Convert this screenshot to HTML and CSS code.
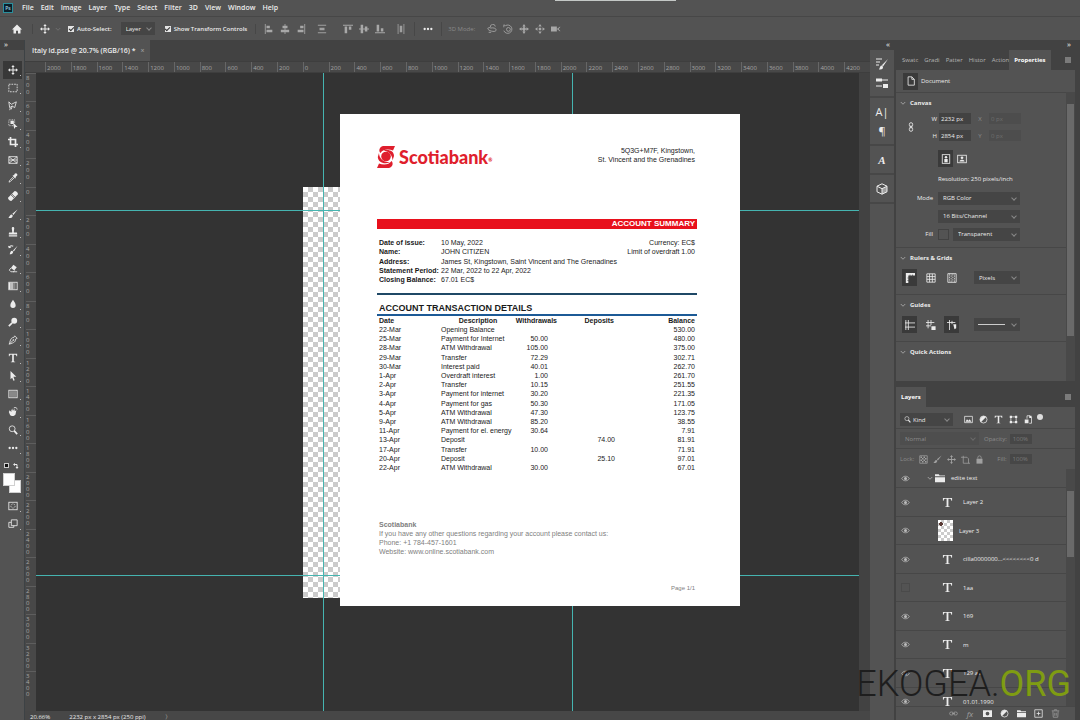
FILE: index.html
```html
<!DOCTYPE html>
<html lang="en">
<head>
  <meta charset="UTF-8" />
  <meta name="viewport" content="width=device-width, initial-scale=1" />
  <title>Italy id.psd @ 20.7%</title>
  <link rel="stylesheet" href="styles.css">
</head>
<body>

  <!-- Icon sprite -->
  <svg class="sprite" aria-hidden="true">
    <symbol id="move" viewBox="0 0 12 12"><path d="M6 0l2 2.5H6.6v2.9h2.9V4L12 6 9.500 8V6.600H6.600v2.900H8L6 12 4 9.500h1.400V6.600H2.500V8L0 6l2.500-2v1.400h2.900V2.500H4z"/></symbol>
    <symbol id="marquee" viewBox="0 0 12 12"><rect class="ln" x="1" y="1.500" width="10" height="9" stroke-dasharray="2 1.200"/></symbol>
    <symbol id="lasso" viewBox="0 0 12 12"><path class="ln" d="M1 1l3 3 6-3-2 7-3-2-3 2zM3 8l-1 3M5 6l-1 4"/></symbol>
    <symbol id="quick" viewBox="0 0 12 12"><rect class="ln" x="1" y="1" width="7" height="7" stroke-dasharray="1 1"/><path d="M3 2h4v4H3zM6 4.500l5.500 5-2.500.2L7.500 12z"/></symbol>
    <symbol id="crop" viewBox="0 0 12 12"><path class="ln bold" d="M3 0v9h9M0 3h9v9"/></symbol>
    <symbol id="frame" viewBox="0 0 12 12"><path class="ln" d="M1 2h10v8H1zM1 2l10 8M11 2L1 10M1 6h10"/></symbol>
    <symbol id="dropper" viewBox="0 0 12 12"><path d="M8 1c2-2 4 1 3 2L9 5l.5.8-.8.7-3.200-3.200.8-.8.8.5z"/><path class="ln" d="M6.500 4.500L2 9l-.8 2L3 10l4.800-4.500"/></symbol>
    <symbol id="heal" viewBox="0 0 12 12"><path d="M0 8l8-8c2 0 4 2 4 4l-8 8c-2 0-4-2-4-4z"/><path class="cut" d="M3.500 4.500l4 4M4.500 3.500l4 4"/></symbol>
    <symbol id="brush" viewBox="0 0 12 12"><path d="M11.500.5L5.200 5.800l1.300 1.500zM4.500 6.500c-2 0-2 2-4 4 2.500.8 5 .2 5.200-2.700z"/></symbol>
    <symbol id="stamp" viewBox="0 0 12 12"><path d="M4.500 1.500c0-2 3-2 3 0L7 5v1.500h3c1 0 1 .5 1 2.500H1c0-2 0-2.500 1-2.500h3V5zM1 10h10v1.500H1z"/></symbol>
    <symbol id="history" viewBox="0 0 12 12"><path d="M11.500 1L6 6.500l1 1.200zM5 7c-2 0-2 1.500-3 4 2.500 0 4-.5 4.200-3zM0 1l1 3 3-1-1.400-.8A3 3 0 0 1 6 2l.5-1A4 4 0 0 0 1.500 1.500z"/></symbol>
    <symbol id="eraser" viewBox="0 0 12 12"><path d="M6.500 2l4 3-3 4-4-3z"/><path class="ln" d="M3.500 6L1.500 8.500l2 2H7l1-1.500M6 10.500h5"/></symbol>
    <symbol id="gradient" viewBox="0 0 12 12"><rect class="ln" x="1" y="1.500" width="10" height="9"/><path d="M1 2h2v8H1z"/><path opacity=".7" d="M3 2h3v8H3z"/><path opacity=".35" d="M6 2h3v8H6z"/></symbol>
    <symbol id="blur" viewBox="0 0 12 12"><path d="M6 1c1 2 3.200 4 3.200 6.500a3.200 3.200 0 0 1-6.400 0C2.800 5 5 3 6 1z"/></symbol>
    <symbol id="dodge" viewBox="0 0 12 12"><circle cx="7.500" cy="4.500" r="3.500"/><path class="ln bold" d="M5 7l-4 4"/></symbol>
    <symbol id="pen" viewBox="0 0 12 12"><path class="ln" d="M8 1l3 3-2 1c0 3-1 4-7.500 6C3 5 4 3 7 3zM1.500 11L6 6.500"/><circle cx="6.500" cy="6" r="1"/></symbol>
    <symbol id="type" viewBox="0 0 12 12"><path d="M1 1h10v3h-.8C10 2.500 9.500 2 8 2h-1v7.500c0 .7.500.9 1.600 1v.5H3.400v-.5c1.100-.1 1.600-.3 1.600-1V2H4C2.500 2 2 2.500 1.800 4H1z"/></symbol>
    <symbol id="arrow" viewBox="0 0 12 12"><path d="M3 0l7 7H6.500L8 11l-1.500.6L5 8l-2 2z"/></symbol>
    <symbol id="rect" viewBox="0 0 12 12"><rect class="ln" x="1" y="1.500" width="10" height="9"/><path opacity=".35" d="M2 2.500h8v7H2z"/></symbol>
    <symbol id="hand" viewBox="0 0 12 12"><path d="M2 4l2 2V2.500l1 2L6 1.500l.5 3L8 2v3l2-1-1 5c-.8 2-5 2.500-6.500.5L1 6z"/><path class="ln" d="M7 1c2-1 4 0 4 2"/></symbol>
    <symbol id="search" viewBox="0 0 12 12"><circle class="ln" cx="5" cy="4.500" r="3.500"/><path class="ln bold" d="M7.500 7l3.500 4"/></symbol>
    <symbol id="dots" viewBox="0 0 12 12"><circle cx="2" cy="6" r="1.400"/><circle cx="6" cy="6" r="1.400"/><circle cx="10" cy="6" r="1.400"/></symbol>
    <symbol id="mask" viewBox="0 0 12 12"><rect class="ln" x="1" y="1.500" width="10" height="9"/><circle class="ln" cx="6" cy="6" r="2.500" stroke-dasharray="1 1"/></symbol>
    <symbol id="screens" viewBox="0 0 12 12"><path class="ln" d="M4 1h7v7H4zM4 4H1v6h6V8"/></symbol>
    <symbol id="home" viewBox="0 0 12 12"><path d="M6 .5L0 6.500h1.800V11.500h3V8h2.400v3.500h3V6.500H12z"/></symbol>
    <symbol id="al-left" viewBox="0 0 12 12"><path d="M1 0h1v12H1zM3 2h4v3H3zM3 7h7v3H3z"/></symbol>
    <symbol id="al-mid" viewBox="0 0 12 12"><path d="M5.500 0h1v12h-1zM3 2h6v3H3zM1 7h10v3H1z"/></symbol>
    <symbol id="al-right" viewBox="0 0 12 12"><path d="M10 0h1v12h-1zM5 2h4v3H5zM2 7h7v3H2z"/></symbol>
    <symbol id="al-dist" viewBox="0 0 12 12"><path d="M1 1h10v1H1zM1 10h10v1H1zM3 4.500h6v3H3z"/></symbol>
    <symbol id="al-top" viewBox="0 0 12 12"><path d="M0 1h12v1H0zM2 3h3v8H2zM7 3h3v4H7z"/></symbol>
    <symbol id="al-center" viewBox="0 0 12 12"><path d="M0 5.500h12v1H0zM2 1h3v10H2zM7 3h3v6H7z"/></symbol>
    <symbol id="al-bottom" viewBox="0 0 12 12"><path d="M0 10h12v1H0zM2 1h3v8H2zM7 5h3v4H7z"/></symbol>
    <symbol id="al-spread" viewBox="0 0 12 12"><path d="M2 0h1v12H2zM9 0h1v12H9zM4.500 2h3v8h-3z"/></symbol>
    <symbol id="orbit" viewBox="0 0 12 12"><path class="ln" d="M4 4a3 3 0 0 1 6-1M1 5c-1 3 10 6 10 2 0-2-4-3-7-2M1 5l3-1M5 10H2"/></symbol>
    <symbol id="roll" viewBox="0 0 12 12"><circle class="ln" cx="6.500" cy="6.500" r="2.300"/><path class="ln" d="M1 4V1l2 1a5 5 0 1 1-2 6"/></symbol>
    <symbol id="slide" viewBox="0 0 12 12"><path d="M6 0l2 3H6.700v2.300H9V4l3 2-3 2V6.700H6.700V9H8l-2 3-2-3h1.300V6.700H3V8L0 6l3-2v1.300h2.300V3H4z"/><circle cx="6" cy="6" r="2"/></symbol>
    <symbol id="scale" viewBox="0 0 12 12"><path d="M4.500 4.500h3v3h-3zM6 0l2 3H4zM6 12l2-3H4zM0 6l3-2v4zM12 6L9 4v4z"/></symbol>
    <symbol id="cam" viewBox="0 0 12 12"><path d="M0 3h7v6H0zM7 6l4-3v1L9 6l2 2v1z"/></symbol>
    <symbol id="brushes" viewBox="0 0 12 12"><path class="ln" d="M0 1h6M0 4h4M0 7h3"/><path d="M12 1L6 7l1 1.500zM6 7.500c-2 0-2 2-3 4 2 0 4 0 4-2.500z"/></symbol>
    <symbol id="sliders" viewBox="0 0 12 12"><path d="M0 1.500h6v3H0zM6 2.500h6v1H6zM0 8.500h6v1H0zM7 7h5v4H7z"/></symbol>
    <symbol id="cube" viewBox="0 0 12 12"><path class="ln" d="M6 .8l5 2.400v5.600l-5 2.400-5-2.400V3.200zM1 3.200l5 2.500 5-2.500M6 5.700v5.500"/><path opacity=".5" d="M6 5.700l5-2.500v5.600l-5 2.400z"/></symbol>
    <symbol id="doc" viewBox="0 0 12 12"><path class="ln" d="M2.500 1H7l3 3v7H2.500zM7 1v3h3"/></symbol>
    <symbol id="link" viewBox="0 0 12 12"><rect class="ln" x="4" y="0.800" width="4" height="5" rx="2"/><rect class="ln" x="4" y="6.200" width="4" height="5" rx="2"/><path class="ln" d="M6 4v4"/></symbol>
    <symbol id="portrait" viewBox="0 0 12 12"><rect class="ln" x="1.500" y=".8" width="9" height="10.400"/><circle cx="6" cy="4" r="1.500"/><path d="M4 6h4v4H4z"/></symbol>
    <symbol id="landscape" viewBox="0 0 12 12"><rect class="ln" x=".8" y="1.500" width="10.400" height="9"/><circle cx="6" cy="4.500" r="1.600"/><path d="M3 9c0-3 6-3 6 0z"/></symbol>
    <symbol id="ruler" viewBox="0 0 12 12"><path d="M1 0h11v3H4v9H1z"/><path class="cut" d="M6 2v2M9 2v2M3 6h2M3 9h2"/></symbol>
    <symbol id="grid" viewBox="0 0 12 12"><path class="ln" d="M1 1h10v10H1zM1 4.300h10M1 7.600h10M4.300 1v10M7.600 1v10"/></symbol>
    <symbol id="pixgrid" viewBox="0 0 12 12"><path class="ln" d="M1 .8h10v10.400H1z"/><path class="ln" stroke-dasharray="1 1" d="M3 1v10M5 2v10M7 1v10M9 2v10"/></symbol>
    <symbol id="guides" viewBox="0 0 12 12"><path class="ln" d="M4 0v12M0 3.500h12M0 8.500h12M1 0v12"/></symbol>
    <symbol id="guidelock" viewBox="0 0 12 12"><path class="ln" d="M2.500 0v10M6 0v6M0 3h10M0 7h6"/><path d="M6.500 7.500h5V12h-5z"/></symbol>
    <symbol id="smart" viewBox="0 0 12 12"><path class="ln" d="M3 0v12M0 3h10M6 1v4"/><path d="M7.500 5H11v5L9 11z"/></symbol>
    <symbol id="picture" viewBox="0 0 12 12"><path class="ln" d="M.8 1.800h10.400v8.400H.8z"/><path d="M2 9l2-3.500 2 2 1.500-2L10 9z"/></symbol>
    <symbol id="adjust" viewBox="0 0 12 12"><circle class="ln" cx="6" cy="6" r="4.700"/><path d="M9.500 2.500a5 5 0 0 0-7 7z"/></symbol>
    <symbol id="shape" viewBox="0 0 12 12"><path class="ln" d="M2.500 2.500h7v7h-7z"/><path d="M1 1h3v3H1zM8 1h3v3H8zM1 8h3v3H1zM8 8h3v3H8z"/></symbol>
    <symbol id="smartobj" viewBox="0 0 12 12"><path class="ln" d="M4 5V1h4l2 2v8H7"/><path d="M1 6h5v5H1zM7 1h3v3H7z"/></symbol>
    <symbol id="checks" viewBox="0 0 12 12"><path class="ln" d="M1 1h10v10H1z"/><path d="M2 2h2v2H2zM6 2h2v2H6zM4 4h2v2H4zM8 4h2v2H8zM2 6h2v2H2zM6 6h2v2H6zM4 8h2v2H4zM8 8h2v2H8z"/></symbol>
    <symbol id="artboard" viewBox="0 0 12 12"><path class="ln" d="M0 3h8l2 2v6M3 1v10h9"/></symbol>
    <symbol id="lock" viewBox="0 0 12 12"><path d="M2 5h8v6.500H2z"/><path class="ln" d="M3.800 5V3c0-2.500 4.400-2.500 4.400 0v2"/></symbol>
    <symbol id="folder" viewBox="0 0 12 12"><path d="M0 1.500h4.500l1 1.500H12v1H0zM0 5h12v6H0z"/></symbol>
    <symbol id="eye" viewBox="0 0 12 12"><path class="ln" d="M1 6c2-4 8-4 10 0-2 4-8 4-10 0z"/><circle cx="6" cy="6" r="2"/></symbol>
    <symbol id="chain" viewBox="0 0 12 12"><rect class="ln" x=".8" y="4" width="5" height="4" rx="2"/><rect class="ln" x="6.200" y="4" width="5" height="4" rx="2"/><path class="ln" d="M4 6h4"/></symbol>
    <symbol id="addmask" viewBox="0 0 12 12"><path fill-rule="evenodd" d="M0 1.500h12v9H0zM6 3.500a2.500 2.500 0 1 0 0 5 2.500 2.500 0 0 0 0-5z"/></symbol>
    <symbol id="plus" viewBox="0 0 12 12"><path class="ln" d="M1 1h10v10H1zM6 3.500v5M3.500 6h5"/></symbol>
    <symbol id="trash" viewBox="0 0 12 12"><path class="ln" d="M1 2.500h10M4.500 2V1h3v1M2.500 3l.5 8h6l.5-8M5 5v4M7 5v4"/></symbol>
    <symbol id="chev" viewBox="0 0 12 12"><path class="ln" d="M1.500 4L6 8.500 10.500 4"/></symbol>
    <symbol id="burger" viewBox="0 0 12 12"><path class="ln bold" d="M0 2h12M0 6h12M0 10h12"/></symbol>
    <symbol id="swap" viewBox="0 0 12 12"><path class="ln bold" d="M2 3h6v7"/><path d="M0 3l4-3v6zM8 12l-3-4h6z"/></symbol>
  </svg>

  <div class="app">

    <!-- Menu bar -->
    <nav class="menubar">
      <span class="ps-logo">Ps</span>
      <button>File</button>
      <button>Edit</button>
      <button>Image</button>
      <button>Layer</button>
      <button>Type</button>
      <button>Select</button>
      <button>Filter</button>
      <button>3D</button>
      <button>View</button>
      <button>Window</button>
      <button>Help</button>
    </nav>

    <!-- Tool options -->
    <div class="options">
      <button class="home" aria-label="Home"><svg><use href="#home"/></svg></button>
      <button class="current" aria-label="Move tool"><svg><use href="#move"/></svg><svg class="tiny"><use href="#chev"/></svg></button>
      <label class="check"><input type="checkbox" checked> Auto-Select:</label>
      <span class="select auto"><select aria-label="Auto select target"><option>Layer</option></select></span>
      <label class="check"><input type="checkbox" checked> Show Transform Controls</label>
      <div class="group aligns">
        <button aria-label="Align left"><svg><use href="#al-left"/></svg></button>
        <button aria-label="Align centers"><svg><use href="#al-mid"/></svg></button>
        <button aria-label="Align right"><svg><use href="#al-right"/></svg></button>
      </div>
      <button class="dim" aria-label="Distribute"><svg><use href="#al-dist"/></svg></button>
      <div class="group plain">
        <button aria-label="Align top"><svg><use href="#al-top"/></svg></button>
        <button aria-label="Align middle"><svg><use href="#al-center"/></svg></button>
        <button aria-label="Align bottom"><svg><use href="#al-bottom"/></svg></button>
      </div>
      <button class="dim" aria-label="Distribute spacing"><svg><use href="#al-spread"/></svg></button>
      <button class="more" aria-label="More"><svg><use href="#dots"/></svg></button>
      <span class="mode3d">3D Mode:</span>
      <div class="group plain modes">
        <button aria-label="Orbit"><svg><use href="#orbit"/></svg></button>
        <button aria-label="Roll"><svg><use href="#roll"/></svg></button>
        <button aria-label="Pan"><svg><use href="#slide"/></svg></button>
        <button aria-label="Slide"><svg><use href="#scale"/></svg></button>
        <button aria-label="Camera"><svg><use href="#cam"/></svg></button>
      </div>
    </div>

    <div class="main">

      <!-- Toolbar -->
      <aside class="toolbar">
        <div class="strip">»</div>
        <div class="tools">
          <button class="active" aria-label="Move"><svg><use href="#move"/></svg></button>
          <button aria-label="Marquee"><svg><use href="#marquee"/></svg></button>
          <button aria-label="Lasso"><svg><use href="#lasso"/></svg></button>
          <button aria-label="Object selection"><svg><use href="#quick"/></svg></button>
          <button aria-label="Crop"><svg><use href="#crop"/></svg></button>
          <button aria-label="Frame"><svg><use href="#frame"/></svg></button>
          <button aria-label="Eyedropper"><svg><use href="#dropper"/></svg></button>
          <button aria-label="Healing brush"><svg><use href="#heal"/></svg></button>
          <button aria-label="Brush"><svg><use href="#brush"/></svg></button>
          <button aria-label="Clone stamp"><svg><use href="#stamp"/></svg></button>
          <button aria-label="History brush"><svg><use href="#history"/></svg></button>
          <button aria-label="Eraser"><svg><use href="#eraser"/></svg></button>
          <button aria-label="Gradient"><svg><use href="#gradient"/></svg></button>
          <button aria-label="Blur"><svg><use href="#blur"/></svg></button>
          <button aria-label="Dodge"><svg><use href="#dodge"/></svg></button>
          <button aria-label="Pen"><svg><use href="#pen"/></svg></button>
          <button aria-label="Type"><svg><use href="#type"/></svg></button>
          <button aria-label="Path selection"><svg><use href="#arrow"/></svg></button>
          <button aria-label="Rectangle"><svg><use href="#rect"/></svg></button>
          <button aria-label="Hand"><svg><use href="#hand"/></svg></button>
          <button aria-label="Zoom"><svg><use href="#search"/></svg></button>
          <button aria-label="Edit toolbar"><svg><use href="#dots"/></svg></button>
        </div>
        <div class="swap"><span class="default"></span><svg class="tiny"><use href="#swap"/></svg></div>
        <div class="swatches"><span class="bg"></span><span class="fg"></span></div>
        <div class="tools last">
          <button aria-label="Quick mask"><svg><use href="#mask"/></svg></button>
          <button aria-label="Screen mode"><svg><use href="#screens"/></svg></button>
        </div>
      </aside>

      <!-- Document window -->
      <main class="editor">
        <div class="doc-tabs">
          <div class="doc-tab">Italy id.psd @ 20.7% (RGB/16) * <button aria-label="Close">×</button></div>
        </div>
        <div class="ruler-x" id="rulerX"></div>
        <div class="work">
          <div class="ruler-y" id="rulerY"></div>
          <div class="canvas">
            <div class="board"></div>
            <i class="guide v one"></i>
            <i class="guide v two"></i>
            <i class="guide h one"></i>
            <i class="guide h two"></i>

            <article class="page">
              <header class="page-head">
                <div class="brand">
                  <svg viewBox="0 0 18 22">
                    <path d="M6 0h12l-2 4.500C12 3 6 3 3.500 7 1.500 5 2 1 6 0z"/>
                    <path d="M12 22H0l2-4.500c4 1.500 10 1.500 12.500-2.500 2 2 1.500 6-2.500 7z"/>
                    <circle cx="9" cy="10.500" r="4.800"/>
                    <path d="M2 7c0 5 4 9.500 11 9.300C7 19 1 16 .8 11z"/>
                    <path d="M15.500 14.500c0-5-3-9-9-10C12 3 17 5 17 10z"/>
                  </svg>
                  <span>Scotiabank</span><sub>®</sub>
                </div>
                <address>5Q3G+M7F, Kingstown,<br>St. Vincent and the Grenadines</address>
              </header>

              <h2 class="banner">ACCOUNT SUMMARY</h2>

              <div class="summary">
                <dl>
                  <dt>Date of issue:</dt><dd>10 May, 2022</dd>
                  <dt>Name:</dt><dd>JOHN CITIZEN</dd>
                  <dt>Address:</dt><dd>James St, Kingstown, Saint Vincent and The Grenadines</dd>
                  <dt>Statement Period:</dt><dd>22 Mar, 2022 to 22 Apr, 2022</dd>
                  <dt>Closing Balance:</dt><dd>67.01 EC$</dd>
                </dl>
                <p>Currency: EC$<br>Limit of overdraft 1.00</p>
              </div>

              <h3>ACCOUNT TRANSACTION DETAILS</h3>
              <table>
                <colgroup><col class="c-date"><col class="c-desc"><col class="c-out"><col class="c-in"><col></colgroup>
                <thead>
                  <tr><th>Date</th><th>Description</th><th>Withdrawals</th><th>Deposits</th><th>Balance</th></tr>
                </thead>
                <tbody>
                  <tr><td>22-Mar</td><td>Opening Balance</td><td></td><td></td><td>530.00</td></tr>
                  <tr><td>25-Mar</td><td>Payment for Internet</td><td>50.00</td><td></td><td>480.00</td></tr>
                  <tr><td>28-Mar</td><td>ATM Withdrawal</td><td>105.00</td><td></td><td>375.00</td></tr>
                  <tr><td>29-Mar</td><td>Transfer</td><td>72.29</td><td></td><td>302.71</td></tr>
                  <tr><td>30-Mar</td><td>Interest paid</td><td>40.01</td><td></td><td>262.70</td></tr>
                  <tr><td>1-Apr</td><td>Overdraft interest</td><td>1.00</td><td></td><td>261.70</td></tr>
                  <tr><td>2-Apr</td><td>Transfer</td><td>10.15</td><td></td><td>251.55</td></tr>
                  <tr><td>3-Apr</td><td>Payment for internet</td><td>30.20</td><td></td><td>221.35</td></tr>
                  <tr><td>4-Apr</td><td>Payment for gas</td><td>50.30</td><td></td><td>171.05</td></tr>
                  <tr><td>5-Apr</td><td>ATM Withdrawal</td><td>47.30</td><td></td><td>123.75</td></tr>
                  <tr><td>9-Apr</td><td>ATM Withdrawal</td><td>85.20</td><td></td><td>38.55</td></tr>
                  <tr><td>11-Apr</td><td>Payment for el. energy</td><td>30.64</td><td></td><td>7.91</td></tr>
                  <tr><td>13-Apr</td><td>Deposit</td><td></td><td>74.00</td><td>81.91</td></tr>
                  <tr><td>17-Apr</td><td>Transfer</td><td>10.00</td><td></td><td>71.91</td></tr>
                  <tr><td>20-Apr</td><td>Deposit</td><td></td><td>25.10</td><td>97.01</td></tr>
                  <tr><td>22-Apr</td><td>ATM Withdrawal</td><td>30.00</td><td></td><td>67.01</td></tr>
                </tbody>
              </table>

              <footer>
                <p><strong>Scotiabank</strong><br>
                If you have any other questions regarding your account please contact us:<br>
                Phone: +1 784-457-1601<br>
                Website: www.online.scotiabank.com</p>
                <p class="page-no">Page 1/1</p>
              </footer>
            </article>
          </div>
        </div>
        <div class="status"><span>20.66%</span><span class="dims">2232 px x 2854 px (250 ppi)</span><span>〉</span></div>
      </main>

      <!-- Collapsed panels -->
      <aside class="dock">
        <div class="strip">«</div>
        <div class="dock-group">
          <button aria-label="Brush settings"><svg><use href="#brushes"/></svg></button>
          <button aria-label="Brushes"><svg><use href="#sliders"/></svg></button>
        </div>
        <div class="dock-group">
          <button>A|</button>
          <button>¶</button>
        </div>
        <div class="dock-group"><button class="glyphs">A</button></div>
        <div class="dock-group"><button aria-label="3D"><svg><use href="#cube"/></svg></button></div>
      </aside>

      <!-- Panels -->
      <aside class="panels">
        <div class="strip">»</div>

        <section class="properties">
          <div class="tabs">
            <button>Swatc</button>
            <button>Gradi</button>
            <button>Patter</button>
            <button>Histor</button>
            <button>Action</button>
            <button class="active">Properties</button>
            <button class="burger" aria-label="Panel menu"><svg class="tiny"><use href="#burger"/></svg></button>
          </div>
          <div class="doc-row"><span class="box on"><svg><use href="#doc"/></svg></span>Document</div>
          <div class="scroll">
            <div class="body">
              <div class="block canvas-block">
                <h4><svg class="tiny"><use href="#chev"/></svg>Canvas</h4>
                <div class="size">
                  <svg class="chain"><use href="#link"/></svg>
                  <label for="w">W</label><input id="w" value="2232 px">
                  <label class="off" for="x">X</label><input id="x" value="0 px" disabled>
                  <label for="h">H</label><input id="h" value="2854 px">
                  <label class="off" for="y">Y</label><input id="y" value="0 px" disabled>
                </div>
                <div class="orient">
                  <button class="box on" aria-label="Portrait"><svg><use href="#portrait"/></svg></button>
                  <button class="box" aria-label="Landscape"><svg><use href="#landscape"/></svg></button>
                </div>
                <p>Resolution: 250 pixels/inch</p>
                <div class="field"><label for="mode">Mode</label><span class="select"><select id="mode"><option>RGB Color</option></select></span></div>
                <div class="field"><label for="depth"></label><span class="select"><select id="depth" aria-label="Bit depth"><option>16 Bits/Channel</option></select></span></div>
                <div class="field"><label for="fill">Fill</label><i class="fill-box"></i><span class="select"><select id="fill"><option>Transparent</option></select></span></div>
              </div>
              <div class="block">
                <h4><svg class="tiny"><use href="#chev"/></svg>Rulers &amp; Grids</h4>
                <div class="icons">
                  <button class="box on" aria-label="Rulers"><svg><use href="#ruler"/></svg></button>
                  <button class="box" aria-label="Grid"><svg><use href="#grid"/></svg></button>
                  <button class="box" aria-label="Pixel grid"><svg><use href="#pixgrid"/></svg></button>
                  <span class="select"><select aria-label="Units"><option>Pixels</option></select></span>
                </div>
              </div>
              <div class="block">
                <h4><svg class="tiny"><use href="#chev"/></svg>Guides</h4>
                <div class="icons">
                  <button class="box on" aria-label="Show guides"><svg><use href="#guides"/></svg></button>
                  <button class="box" aria-label="Lock guides"><svg><use href="#guidelock"/></svg></button>
                  <button class="box on" aria-label="Smart guides"><svg><use href="#smart"/></svg></button>
                  <span class="select line"><select aria-label="Guide style"><option></option></select></span>
                </div>
              </div>
              <div class="block">
                <h4><svg class="tiny"><use href="#chev"/></svg>Quick Actions</h4>
              </div>
            </div>
            <div class="bar"><i></i></div>
          </div>
        </section>

        <section class="layers">
          <div class="tabs">
            <button class="active">Layers</button>
            <button class="burger" aria-label="Panel menu"><svg class="tiny"><use href="#burger"/></svg></button>
          </div>
          <div class="row filter">
            <span class="select kind"><svg><use href="#search"/></svg><select aria-label="Filter kind"><option>Kind</option></select></span>
            <button aria-label="Pixel layers"><svg><use href="#picture"/></svg></button>
            <button aria-label="Adjustment layers"><svg><use href="#adjust"/></svg></button>
            <button aria-label="Type layers"><svg><use href="#type"/></svg></button>
            <button aria-label="Shape layers"><svg><use href="#shape"/></svg></button>
            <button aria-label="Smart objects"><svg><use href="#smartobj"/></svg></button>
            <i class="toggle"></i>
          </div>
          <div class="row blend">
            <span class="select"><select aria-label="Blend mode" disabled><option>Normal</option></select></span>
            <label for="opacity">Opacity:</label><input id="opacity" value="100%" disabled>
          </div>
          <div class="row locks">
            <span>Lock:</span>
            <svg><use href="#checks"/></svg>
            <svg><use href="#brush"/></svg>
            <svg><use href="#move"/></svg>
            <svg><use href="#artboard"/></svg>
            <svg><use href="#lock"/></svg>
            <label for="fillp">Fill:</label><input id="fillp" value="100%" disabled>
          </div>
          <div class="scroll list">
            <ul class="body">
              <li class="folder"><svg class="eye"><use href="#eye"/></svg><svg class="tiny"><use href="#chev"/></svg><svg><use href="#folder"/></svg><span>edite text</span></li>
              <li><svg class="eye"><use href="#eye"/></svg><svg class="t"><use href="#type"/></svg><span>Layer 2</span></li>
              <li class="pixel"><svg class="eye"><use href="#eye"/></svg><i class="thumb"></i><span>Layer 3</span></li>
              <li><svg class="eye"><use href="#eye"/></svg><svg class="t"><use href="#type"/></svg><span>cilla0000000...&lt;&lt;&lt;&lt;&lt;&lt;&lt;&lt;0 d</span></li>
              <li><i class="eye hidden"></i><svg class="t"><use href="#type"/></svg><span>1aa</span></li>
              <li><svg class="eye"><use href="#eye"/></svg><svg class="t"><use href="#type"/></svg><span>169</span></li>
              <li><svg class="eye"><use href="#eye"/></svg><svg class="t"><use href="#type"/></svg><span>m</span></li>
              <li><svg class="eye"><use href="#eye"/></svg><svg class="t"><use href="#type"/></svg><span>129 aa</span></li>
              <li><svg class="eye"><use href="#eye"/></svg><svg class="t"><use href="#type"/></svg><span>01.01.1990</span></li>
            </ul>
            <div class="bar"><i></i></div>
          </div>
          <div class="actions">
            <button class="dim" aria-label="Link layers"><svg><use href="#chain"/></svg></button>
            <button class="dim fx">fx</button>
            <button aria-label="Add mask"><svg><use href="#addmask"/></svg></button>
            <button aria-label="Adjustment"><svg><use href="#adjust"/></svg></button>
            <button aria-label="Group"><svg><use href="#folder"/></svg></button>
            <button aria-label="New layer"><svg><use href="#plus"/></svg></button>
            <button class="dim" aria-label="Delete"><svg><use href="#trash"/></svg></button>
          </div>
        </section>
      </aside>
    </div>

    <div class="watermark">EKOGEA<span>.</span><b>ORG</b></div>
  </div>

  <script>
    // ruler labels count down to the document origin, then up again
    function fillRuler(id, from, to) {
      let html = "";
      for (let n = from; n <= to; n += 200) {
        html += `<span>${Math.abs(n)}</span>`;
      }
      document.getElementById(id).innerHTML = html;
    }

    fillRuler("rulerX", -2000, 4200);
    fillRuler("rulerY", -800, 3400);
  </script>
</body>
</html>
```

FILE: styles.css
```css
:root {
  --panel: #535353;
  --dark: #424242;
  --edge: #474747;
  --field: #454545;
  --canvas: #333333;
  --text: #ececec;
  --mute: #8c8c8c;
  --guide: #45b4b0;
  --red: #e8101c;
}

* {
  margin: 0;
  padding: 0;
  box-sizing: border-box;
}

body {
  font-family: "Open Sans", sans-serif;
  font-size: 6px;
  line-height: 8px;
  color: var(--text);
  background: var(--panel);
}

button, select, input {
  font: inherit;
  color: inherit;
  background: none;
  border: none;
  border-radius: 0;
  appearance: none;
}

button {
  display: flex;
  align-items: center;
  justify-content: center;
  white-space: nowrap;
}

svg {
  width: 10px;
  height: 10px;
  fill: currentColor;
  flex: none;
}

svg.tiny {
  width: 6px;
  height: 6px;
}

.sprite {
  position: absolute;
  width: 0;
  height: 0;
}

.ln {
  fill: none;
  stroke: currentColor;
  stroke-width: 1;
}

.ln.bold {
  stroke-width: 2;
}

.cut {
  fill: none;
  stroke: #535353;
  stroke-width: 1;
}

.app {
  display: flex;
  flex-direction: column;
  height: 100vh;
  overflow: hidden;
  position: relative;
}

/* Menu bar */
.menubar {
  display: flex;
  align-items: center;
  gap: 7px;
  height: 17px;
  padding-left: 3px;
  border-bottom: 1px solid var(--edge);
  font-size: 7px;
  font-weight: 600;
  position: relative;
}

.menubar::before {
  content: "";
  position: absolute;
  top: 0;
  left: 555px;
  width: 121px;
  height: 1px;
  background: #c4c8c6;
}

.ps-logo {
  width: 10px;
  height: 10px;
  margin-right: 2px;
  border: 1px solid #2a8f9c;
  background: #0b1f2b;
  color: #9fd6e2;
  font-size: 5px;
  line-height: 8px;
  text-align: center;
}

/* Options bar */
.options {
  display: flex;
  align-items: center;
  height: 23px;
  padding-left: 12px;
}

.home {
  width: 21px;
  justify-content: flex-start;
  border-right: 1px solid var(--edge);
}

.current {
  gap: 5px;
  width: 35px;
}

.options .tiny {
  color: var(--mute);
}

.check {
  display: flex;
  align-items: center;
  gap: 3px;
  white-space: nowrap;
  font-weight: 600;
}

.check input {
  width: 6px;
  height: 6px;
  background: #e4e4e4;
  display: grid;
  place-items: center;
}

.check input:checked::before {
  content: "";
  width: 4px;
  height: 2px;
  border: solid #333;
  border-width: 0 0 1px 1px;
  transform: rotate(-45deg);
}

.select {
  display: flex;
  align-items: center;
  position: relative;
  height: 13px;
  background: var(--field);
}

.select select {
  width: 100%;
  height: 100%;
  padding-left: 5px;
  line-height: 8px;
}

.select::after {
  content: "";
  position: absolute;
  right: 4px;
  top: 4px;
  width: 3px;
  height: 3px;
  border: solid #888;
  border-width: 0 1px 1px 0;
  transform: rotate(45deg);
  pointer-events: none;
}

.select.auto {
  width: 34px;
  margin: 0 10px 0 9px;
}

.group {
  display: flex;
  gap: 6px;
  color: #a8a8a8;
}

.group.plain {
  padding-left: 16px;
  margin-right: 11px;
}

.aligns {
  margin: 0 11px 0 8px;
  padding-left: 8px;
  border-left: 1px solid var(--edge);
}

.dim {
  color: #a0a0a0;
}

.more {
  margin-left: 8px;
  width: 28px;
  height: 14px;
  border: solid var(--edge);
  border-width: 0 1px;
}

.mode3d {
  margin-left: 6px;
  color: #8a8a8a;
}

.group.modes {
  padding-left: 12px;
}

/* Main area */
.main {
  display: flex;
  flex: 1;
  min-height: 0;
  background: var(--dark);
}

.strip {
  height: 10px;
  padding: 0 4px;
  background: var(--dark);
  font-size: 8px;
  line-height: 8px;
}

.toolbar {
  width: 25px;
  background: var(--panel);
  border-right: 1px solid #3d4245;
}

.tools {
  display: flex;
  flex-direction: column;
  padding: 11px 2px 0 3px;
}

.tools button {
  height: 18px;
  position: relative;
}

.tools button::after {
  content: "";
  position: absolute;
  right: 1px;
  bottom: 3px;
  width: 1px;
  height: 1px;
  background: #bbb;
}

.tools .active {
  background: #383838;
}

.swap {
  display: flex;
  justify-content: space-between;
  padding: 6px 5px 0 4px;
  height: 16px;
}

.default {
  width: 5px;
  height: 5px;
  background: #111;
  border: 1px solid #ccc;
}

.swatches {
  position: relative;
  height: 20px;
  margin: 0 3px;
}

.swatches span {
  position: absolute;
  width: 12px;
  height: 13px;
  background: #fff;
  border: 1px solid #d0d0d0;
}

.swatches .bg {
  right: 0;
  bottom: 0;
}

.swatches .fg {
  left: 0;
  top: 0;
}

.tools.last {
  padding-top: 4px;
}

/* Editor */
.editor {
  flex: 1;
  display: flex;
  flex-direction: column;
  min-width: 0;
  overflow: hidden;
}

.doc-tabs {
  display: flex;
  height: 21px;
  background: var(--dark);
}

.doc-tab {
  display: flex;
  align-items: center;
  gap: 5px;
  padding: 0 5px 0 7px;
  background: var(--panel);
  font-size: 7px;
  font-weight: 600;
}

.doc-tab button {
  color: #999;
}

.ruler-x {
  display: flex;
  height: 12px;
  padding-left: 20px;
  background: #484848;
  border: solid #3e3e3e;
  border-width: 1px 0;
  color: #a6a6a6;
  overflow: hidden;
}

.ruler-x span {
  flex: 1 1 0;
  min-width: 0;
  border-left: 1px solid #666;
  padding: 2px 0 0 1px;
}

.work {
  flex: 1;
  display: flex;
  min-height: 0;
}

.ruler-y {
  width: 11px;
  padding: 0 0 0 1px;
  background: #484848;
  color: #a6a6a6;
}

.ruler-y span {
  display: block;
  width: 10px;
  height: 28px;
  padding: 1px 6px 0 0;
  border-top: 1px solid #5e5e5e;
  line-height: 7px;
  word-break: break-all;
}

.ruler-y span:nth-child(even) {
  height: 29px;
}

/* four digits have to share the same row */
.ruler-y span:nth-child(n+10) {
  line-height: 6px;
}

.canvas {
  flex: 1;
  position: relative;
  margin-right: 11px;
  background: var(--canvas);
  overflow: hidden;
}

.board {
  position: absolute;
  left: 267px;
  top: 114px;
  width: 300px;
  height: 411px;
  background: repeating-conic-gradient(#cbcbcb 0 25%, #fff 0 50%) 0 0 / 10px 10px;
}

.guide {
  position: absolute;
  background: var(--guide);
}

.guide.v {
  width: 1px;
  top: 0;
  bottom: 0;
}

.guide.h {
  height: 1px;
  left: 0;
  right: 0;
}

.guide.v.one { left: 287px; }
.guide.v.two { left: 536px; }
.guide.h.one { top: 137px; }
.guide.h.two { top: 502px; }

.status {
  display: flex;
  gap: 19px;
  height: 9px;
  padding: 2px 5px 0;
  background: var(--edge);
}

/* Statement on the canvas */
.page {
  position: absolute;
  left: 304px;
  top: 41px;
  width: 400px;
  padding: 32px 43px 13px 37px;
  background: #fff;
  color: #1a1a1a;
  font-family: "Liberation Sans", sans-serif;
  font-size: 7px;
  line-height: 9px;
}

.page-head {
  display: flex;
  justify-content: space-between;
  height: 73px;
  padding-right: 2px;
}

.brand {
  display: flex;
  height: 22px;
  align-items: center;
  color: #df1f2d;
  font-family: Lato, sans-serif;
  font-size: 18px;
  font-weight: 900;
}

.brand svg {
  width: 18px;
  height: 22px;
  margin-right: 4px;
}

.brand sub {
  padding-top: 6px;
  font-size: 5px;
}

address {
  font-style: normal;
  text-align: right;
}

.banner {
  padding-right: 2px;
  background: var(--red);
  color: #fff;
  font-size: 8px;
  line-height: 10px;
  text-align: right;
}

.summary {
  display: flex;
  justify-content: space-between;
  height: 66px;
  padding: 9px 2px 0;
  border-bottom: 2px solid #1f4866;
}

dl {
  display: grid;
  grid-template-columns: 62px auto;
  align-content: space-between;
  height: 46px;
}

dt {
  font-weight: bold;
  white-space: nowrap;
}

.summary p {
  margin-left: -60px;
  text-align: right;
}

h3 {
  padding: 7px 2px 0;
  border-bottom: 2px solid #1c5a96;
  font-size: 9px;
  line-height: 12px;
}

table {
  width: 100%;
  height: 156px;
  border-collapse: collapse;
  table-layout: fixed;
}

.c-date { width: 64px; }
.c-desc { width: 74px; }
.c-out { width: 42px; }
.c-in { width: 60px; }

th, td {
  white-space: nowrap;
  text-align: right;
}

th:first-child, td:first-child {
  padding-left: 2px;
  text-align: left;
}

th:last-child, td:last-child {
  padding-right: 2px;
}

td:nth-child(2) {
  text-align: left;
}

th:nth-child(2) {
  text-align: center;
}

td:nth-child(3) {
  padding-right: 9px;
}

td:nth-child(4) {
  padding-right: 2px;
}

th:nth-child(4) {
  padding-right: 3px;
}

.page footer {
  padding: 48px 2px 0;
  color: #808080;
}

.page-no {
  margin-top: 28px;
  font-size: 6px;
  text-align: right;
}

/* Collapsed dock */
.dock {
  width: 25px;
  background: var(--panel);
  border-right: 1px solid var(--dark);
}

.dock .strip {
  text-align: right;
}

.dock-group {
  padding: 4px 0;
  border-bottom: 2px solid var(--edge);
}

.dock-group button {
  width: 100%;
  height: 19px;
  font-size: 11px;
}

.dock-group svg {
  width: 12px;
  height: 12px;
}

.glyphs {
  font-family: "Liberation Serif", serif;
  font-style: italic;
  font-weight: bold;
}

/* Panels */
.panels {
  display: flex;
  flex-direction: column;
  width: 185px;
  padding: 0 5px 0 1px;
}

.panels > .strip {
  text-align: right;
}

.tabs {
  display: flex;
  height: 20px;
  background: var(--dark);
  color: #b4b4b4;
}

.tabs button {
  padding-left: 6px;
}

.tabs .active {
  padding: 0 5px;
  background: var(--panel);
  color: #fff;
  font-weight: 700;
}

.tabs .burger {
  margin-left: auto;
  padding-right: 4px;
}

.properties {
  height: 331px;
  background: var(--panel);
  display: flex;
  flex-direction: column;
}

.doc-row {
  display: flex;
  align-items: center;
  gap: 3px;
  height: 22px;
  padding-left: 7px;
}

.box {
  display: flex;
  align-items: center;
  justify-content: center;
  width: 15px;
  height: 17px;
}

.box.on {
  background: #3a3a3a;
}

.scroll {
  display: flex;
  flex: 1;
  min-height: 0;
}

.body {
  flex: 1;
  min-width: 0;
}

.bar {
  width: 9px;
  padding: 12px 1px 0;
  background: #494949;
}

.bar i {
  display: block;
  height: 232px;
  background: #6a6a6a;
}

.block {
  height: 47px;
  padding: 0 6px;
  border-top: 1px solid var(--edge);
}

.canvas-block {
  height: 155px;
}

h4 {
  display: flex;
  align-items: center;
  gap: 4px;
  height: 19px;
  margin-left: -2px;
  font-size: 6px;
}

.size {
  display: grid;
  grid-template-columns: 26px 7px 32px 14px 32px;
  grid-auto-rows: 13px;
  gap: 4px 2px;
  align-items: center;
}

.size .chain {
  grid-row: span 2;
  margin-left: 4px;
}

.size label {
  text-align: right;
}

.size input {
  width: 100%;
  height: 11px;
  padding-left: 2px;
  background: #424242;
}

.size input:disabled {
  background: #4d4d4d;
  color: #6f6f6f;
}

.size .off {
  text-align: center;
  color: var(--mute);
}

.orient {
  display: flex;
  gap: 1px;
  margin: 8px 0 0 36px;
}

.canvas-block p {
  margin: 8px 0 6px 36px;
}

.field {
  display: flex;
  align-items: center;
  gap: 5px;
  height: 18px;
}

.field label {
  width: 31px;
  text-align: right;
}

.field .select {
  flex: none;
  width: 82px;
}

.field .fill-box + .select {
  width: 67px;
  margin-left: -1px;
}

.fill-box {
  width: 11px;
  height: 11px;
  border: 1px solid var(--dark);
}

.icons {
  display: flex;
  align-items: center;
  gap: 6px;
  margin-top: 2px;
}

.icons .select {
  width: 46px;
  margin-left: 9px;
}

.icons .line::before {
  content: "";
  position: absolute;
  left: 4px;
  right: 15px;
  height: 1px;
  background: #ccc;
}

/* Layers */
.layers {
  flex: 1;
  display: flex;
  flex-direction: column;
  min-height: 0;
  margin-top: 6px;
  background: var(--panel);
}

.row {
  display: flex;
  align-items: center;
  gap: 5px;
  height: 20px;
  padding-left: 4px;
  border-bottom: 1px solid var(--edge);
}

.row.filter {
  height: 22px;
}

.kind {
  width: 53px;
  margin-right: 5px;
  padding-left: 4px;
}

.kind select {
  padding-left: 2px;
}

.kind svg {
  width: 7px;
  height: 7px;
}

.filter {
  padding-top: 4px;
}

.filter button {
  width: 10px;
}

.filter button svg {
  width: 9px;
  height: 9px;
}

.toggle {
  width: 6px;
  height: 6px;
  margin: 0 0 6px -1px;
  border-radius: 3px;
  background: #ddd;
}

.blend, .locks {
  color: #8c8c8c;
}

.blend .select {
  width: 79px;
  background: #4e4e4e;
}

.blend .select::after {
  border-color: #6a6a6a;
}

.row select:disabled {
  opacity: 1;
}

.row input {
  width: 22px;
  height: 10px;
  margin-left: -2px;
  padding-left: 3px;
  background: #474747;
  color: #7a7a7a;
}

.locks {
  border: none;
}

.locks svg {
  width: 9px;
  height: 9px;
  color: #a0a0a0;
}

.locks label {
  margin-left: 8px;
}

.list ul {
  list-style: none;
  overflow: hidden;
}

.list li {
  display: flex;
  align-items: center;
  height: 28px;
  border-bottom: 1px solid var(--edge);
  white-space: nowrap;
}

.list li:nth-child(even) {
  height: 29px;
}

.list .folder {
  height: 19px;
}

.eye {
  width: 19px;
  height: 9px;
  color: #bcbcbc;
}

.eye.hidden {
  width: 9px;
  margin: 0 5px;
  border: 1px solid #4a4a4a;
}

.list .t {
  width: 11px;
  height: 11px;
  margin: 0 10px 0 27px;
}

.folder .tiny {
  margin: 0 2px 0 12px;
}

.folder span {
  margin-left: 6px;
}

.thumb {
  width: 15px;
  height: 21px;
  margin: 0 6px 0 23px;
  background:
    radial-gradient(circle at 3px 4px, #5a3a34 0 2px, transparent 2px),
    repeating-conic-gradient(#cbcbcb 0 25%, #fff 0 50%) 0 0 / 6px 6px;
}

.list .bar {
  padding-top: 22px;
}

.list .bar i {
  height: 66px;
}

.actions {
  display: flex;
  gap: 7px;
  height: 14px;
  padding-left: 52px;
  border-top: 1px solid var(--edge);
}

.actions button {
  width: 10px;
}

.actions svg {
  width: 9px;
  height: 9px;
}

.fx {
  font-style: italic;
  font-size: 8px;
}

/* Watermark */
.watermark {
  position: absolute;
  right: 9px;
  bottom: 14px;
  color: #1e1e1e;
  font-family: Roboto, sans-serif;
  font-size: 36px;
  font-weight: 300;
  line-height: 44px;
}

.watermark b {
  color: #7f9c12;
  font-weight: 400;
}
```
